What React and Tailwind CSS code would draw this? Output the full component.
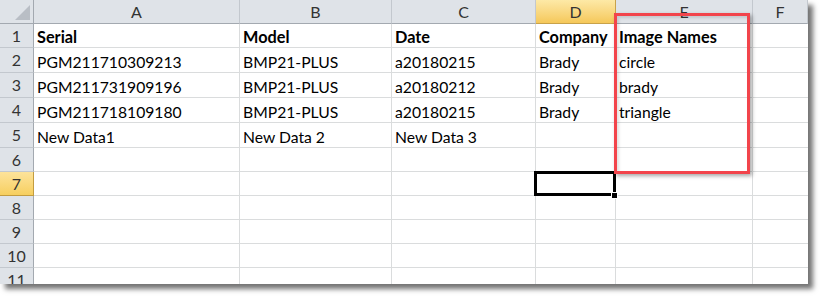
import React from "react";

const cols = ["A", "B", "C", "D", "E", "F"];
const rows = [
  ["Serial", "Model", "Date", "Company", "Image Names", ""],
  ["PGM211710309213", "BMP21-PLUS", "a20180215", "Brady", "circle", ""],
  ["PGM211731909196", "BMP21-PLUS", "a20180212", "Brady", "brady", ""],
  ["PGM211718109180", "BMP21-PLUS", "a20180215", "Brady", "triangle", ""],
  ["New Data1", "New Data 2", "New Data 3", "", "", ""],
  ["", "", "", "", "", ""],
  ["", "", "", "", "", ""],
  ["", "", "", "", "", ""],
  ["", "", "", "", "", ""],
  ["", "", "", "", "", ""],
  ["", "", "", "", "", ""],
];

export default function App() {
  return (
    <div
      className="relative w-[822px] h-[299px] bg-white overflow-hidden"
      style={{ fontFamily: "Lato, 'Open Sans', sans-serif" }}
    >
      <div className="relative w-[808px] h-[284px] bg-white shadow-[5px_5px_5px_rgba(0,0,0,0.55)]">
        <div className="w-[808px] h-[284px] overflow-hidden">
          <div className="grid grid-cols-[34px_206px_152px_144px_80px_137px_55px] grid-rows-[24px_24px_25px_25px_25px_25px_24px_24px_24px_24px_24px_24px] text-[15.7px] text-black">
            {/* corner */}
            <div className="relative bg-[#dfe3e8] border-r border-b border-[#a3a9b0]">
              <svg className="absolute right-[3px] bottom-[3px]" width="15" height="15" viewBox="0 0 15 15">
                <polygon points="15,0 15,15 0,15" fill="#b9bec5" />
              </svg>
            </div>
            {cols.map((c) =>
              c === "D" ? (
                <div
                  key={c}
                  className="flex items-center justify-center leading-[20px] text-[16px] bg-gradient-to-b from-[#fde9a6] to-[#f5c859] border-r border-b border-[#c8a24a] text-[#333]"
                >
                  {c}
                </div>
              ) : (
                <div
                  key={c}
                  className="flex items-center justify-center leading-[20px] text-[16px] bg-[#dfe3e8] border-r border-b border-r-[#c3c8ce] border-b-[#a3a9b0] text-[#333]"
                >
                  {c}
                </div>
              )
            )}
            {rows.map((r, i) => (
              <React.Fragment key={i}>
                {i === 6 ? (
                  <div className="flex items-center justify-center leading-[20px] text-[16px] bg-gradient-to-b from-[#fde39a] to-[#f7cf5e] border-r border-b border-[#c39c3f] text-[#333]">
                    {i + 1}
                  </div>
                ) : (
                  <div className="flex items-center justify-center leading-[20px] text-[16px] bg-[#dfe3e8] border-r border-b border-r-[#a3a9b0] border-b-[#c3c8ce] text-[#333]">
                    {i + 1}
                  </div>
                )}
                {r.map((v, j) => (
                  <div
                    key={j}
                    className={
                      "relative flex items-end leading-[20px] pl-[3px] whitespace-nowrap border-b border-[#dadcdd] " +
                      (j < 5 ? "border-r " : "") +
                      (i === 0 ? "font-bold text-[16.3px]" : "")
                    }
                  >
                    {v}
                    {i === 6 && j === 3 && (
                      <>
                        <div className="absolute left-[-2px] top-[-1px] w-[82px] h-[25px] border-[3px] border-black z-10" />
                        <div className="absolute left-[75px] top-[20px] w-[7px] h-[7px] bg-black border border-white z-10" />
                      </>
                    )}
                  </div>
                ))}
              </React.Fragment>
            ))}
          </div>
        </div>
        {/* annotation box */}
        <div className="absolute left-[614px] top-[13px] w-[136px] h-[161px] border-[3px] border-[#f2444b] shadow-[2px_2px_4px_rgba(0,0,0,0.35),inset_2px_2px_3px_rgba(0,0,0,0.12)] z-20 pointer-events-none" />
      </div>
    </div>
  );
}
